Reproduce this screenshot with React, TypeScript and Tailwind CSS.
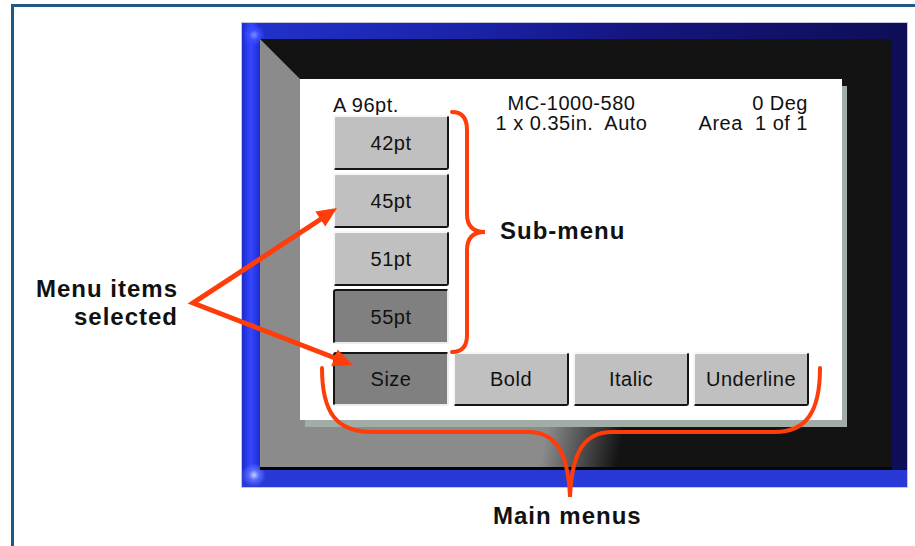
const sub = [
  { label: '42pt', on: false },
  { label: '45pt', on: false },
  { label: '51pt', on: false },
  { label: '55pt', on: true },
];

const main = [
  { label: 'Size', on: true },
  { label: 'Bold', on: false },
  { label: 'Italic', on: false },
  { label: 'Underline', on: false },
];

function Key({ label, on, h }: { label: string; on: boolean; h: string }) {
  const look = on
    ? 'bg-[#808080] border-t-[#151515] border-l-[#151515] border-r-[#ececec] border-b-[#ececec]'
    : 'bg-[#c0c0c0] border-t-[#f6f6f6] border-l-[#f6f6f6] border-r-[#151515] border-b-[#151515]';
  return (
    <div className={`flex w-[116px] ${h} items-center justify-center rounded-[3px] border-2 border-solid ${look}`}>
      {label}
    </div>
  );
}

export default function App() {
  return (
    <div className="relative h-[546px] w-[915px] overflow-hidden bg-white pl-[11px] pt-[4px] font-['Liberation_Sans',Arial,sans-serif]">
      <div className="h-full border-l-[3px] border-t-[3px] border-solid border-[#1e5a85] pl-[228px] pt-[16px]">
        {/* device bezel */}
        <div className="h-[464px] w-[665px] pb-[17px] pl-[18px] pr-[15px] pt-[16px] outline outline-1 outline-[#c3c7de] bg-[radial-gradient(circle_at_12px_12px,#7d8cff_0,#3a4cff_5px,transparent_11px),radial-gradient(circle_at_12px_452px,#c8d0ff_0,#5a6cff_5px,transparent_12px),linear-gradient(to_top,#2a3ad8_0,#2838d4_17px,transparent_17px),linear-gradient(to_right,#1c2bcc_0,#3447ff_9px,#1c2bcc_18px,transparent_18px),linear-gradient(to_right,#2232cc_0%,#1a22a6_35%,#15157e_60%,#0e0e56_100%)]">
          {/* bevel: left panel grey, bottom panel fades to black */}
          <div className="relative h-[431px] w-[632px] bg-[#131313] pb-[50px] pl-[40px] pr-[50px] pt-[40px]">
            <div className="absolute bottom-0 left-0 h-[50px] w-full bg-[linear-gradient(to_top,#050505_0,#050505_3px,transparent_3px),linear-gradient(100deg,#8b8b8b_0%,#8b8b8b_45%,#131313_57%,#131313_100%)]" />
            <div className="absolute bottom-[3px] left-0 top-0 w-[40px] bg-[#8b8b8b] [clip-path:polygon(0_0,100%_40px,100%_100%,0_100%)]" />
            {/* screen */}
            <div className="relative flex h-[341px] w-[542px] flex-col bg-white pb-[14px] pl-[33px] pr-[32px] pt-[14px] text-[20px] leading-[20px] tracking-[0.5px] text-[#111] shadow-[5px_7px_0_#a3ada8]">
              <div className="flex h-[251px]">
                <div className="flex w-[116px] flex-col">
                  <div className="mt-[2px] h-[20px]">A 96pt.</div>
                  <div className="flex flex-col gap-[3px]">
                    {sub.map((s) => (
                      <Key key={s.label} label={s.label} on={s.on} h="h-[55px]" />
                    ))}
                  </div>
                </div>
                <div className="ml-[44px] w-[157px] whitespace-pre text-center">
                  <div>MC-1000-580</div>
                  <div>1 x 0.35in.  Auto</div>
                </div>
                <div className="flex-1 whitespace-pre pr-[2px] text-right">
                  <div>0 Deg</div>
                  <div>Area  1 of 1</div>
                </div>
              </div>
              <div className="mt-[8px] flex gap-[4px]">
                {main.map((m) => (
                  <Key key={m.label} label={m.label} on={m.on} h="h-[54px]" />
                ))}
              </div>
            </div>
          </div>
        </div>
      </div>

      {/* callouts */}
      <svg className="pointer-events-none absolute left-0 top-0" width="915" height="546" viewBox="0 0 915 546">
        <g fill="none" stroke="#ff3d0a" strokeLinecap="round">
          <polyline points="321,219 193,303 335,358" strokeWidth="5" strokeLinejoin="miter" strokeMiterlimit="10" />
          <path d="M452,112 Q467,112 467,130 L467,214 Q467,232 485,232 Q467,232 467,250 L467,335 Q467,352 452,352" strokeWidth="4" />
          <path d="M322,368 C322,412 336,432 372,432 L528,432 C556,432 568,452 570,497 C572,452 584,432 612,432 L775,432 C806,432 820,412 820,368" strokeWidth="4" />
        </g>
        <g fill="#ff3d0a">
          <polygon points="337,208 325.3,226.5 315.3,211.5" />
          <polygon points="353,365 331.2,366.2 337.6,349.4" />
        </g>
      </svg>

      <div className="absolute left-[18px] top-[275px] w-[160px] text-right text-[24px] font-bold leading-[28px] tracking-[1px] text-[#111]">
        <div>Menu items</div>
        <div>selected</div>
      </div>
      <div className="absolute left-[500px] top-[217px] text-[24px] font-bold leading-[28px] tracking-[1px] text-[#111]">
        Sub-menu
      </div>
      <div className="absolute left-[493px] top-[502px] text-[24px] font-bold leading-[28px] tracking-[1px] text-[#111]">
        Main menus
      </div>
    </div>
  );
}
